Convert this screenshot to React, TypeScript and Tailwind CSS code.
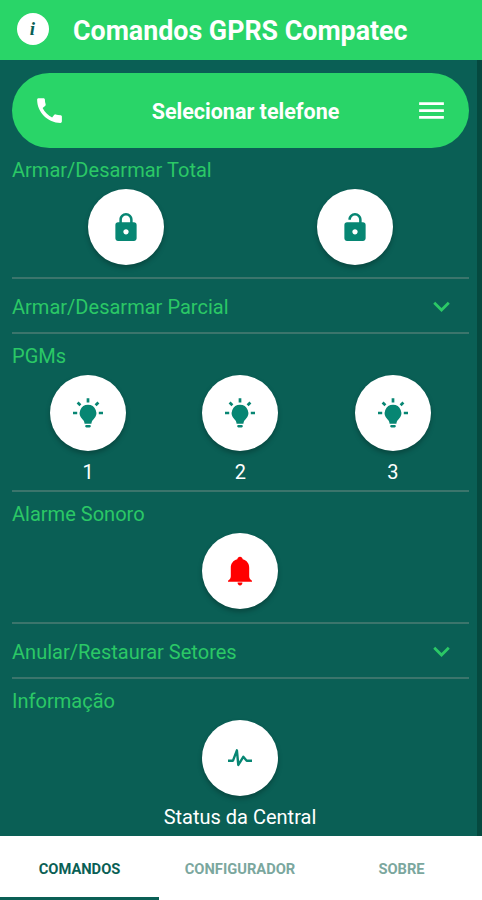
import type { ReactNode } from 'react'
import { MdCall, MdExpandMore, MdMenu } from 'react-icons/md'
import { IoMdLock, IoMdUnlock } from 'react-icons/io'

interface RoundButtonProps {
  children: ReactNode
  label?: string
}

function RoundButton({ children, label }: RoundButtonProps) {
  return (
    <div className="flex flex-1 flex-col items-center">
      <button className="flex size-[76px] items-center justify-center rounded-full bg-white text-[#078673] shadow-[0_3px_5px_rgba(0,0,0,0.25)]">
        {children}
      </button>
      {label && <span className="mt-2 h-6 text-[20px] leading-[26px] whitespace-nowrap text-white">{label}</span>}
    </div>
  )
}

interface SectionProps {
  title: string
  className?: string
  children: ReactNode
}

function Section({ title, className = '', children }: SectionProps) {
  return (
    <section className={className}>
      <h2 className="h-[34px] pt-2 text-[20.05px] leading-7 text-[#2bc866]">{title}</h2>
      <div className="mt-[7px] flex">{children}</div>
    </section>
  )
}

function CollapsedSection({ title }: { title: string }) {
  return (
    <button className="flex h-[55px] w-full items-center justify-between border-b-2 border-[#3b756c] pt-0.5 pr-[11px] text-[#2bc866]">
      <span className="text-[20.05px] leading-7">{title}</span>
      <MdExpandMore size={33} />
    </button>
  )
}

function BulbIcon() {
  return (
    <svg width="32" height="32" viewBox="0 0 32 32" fill="currentColor">
      <path d="M16 7.800a8.300 8.300 0 0 0-5.600 14.400c1.500 1.300 2 2.600 2.200 4.600h6.800c.2-2 .7-3.300 2.200-4.600A8.300 8.300 0 0 0 16 7.800z" />
      <rect x="13.2" y="28" width="5.6" height="2.4" rx="1.100" />
      <path
        d="M16 1.200v4.400M5.600 5.500l2.800 2.800M26.400 5.500l-2.800 2.800M1 16h4.200M26.800 16H31"
        fill="none"
        stroke="currentColor"
        strokeWidth="2.7"
      />
    </svg>
  )
}

function BellIcon() {
  return (
    <svg width="26" height="30" viewBox="0 0 26 30" fill="#ff0000">
      <path d="M13 .8c1.500 0 2.500.9 2.700 2.400 4.200 1.200 6.500 4.300 6.500 8.600v8.500c0 1.800.9 3.200 2.800 4.500v.9H1v-.9c1.900-1.300 2.800-2.700 2.800-4.500v-8.500c0-4.300 2.300-7.400 6.500-8.600C10.500 1.700 11.500.8 13 .8z" />
      <path d="M10.600 26.500h4.800c0 1.800-.8 2.900-2.400 2.900s-2.400-1.100-2.400-2.900z" />
    </svg>
  )
}

function PulseIcon() {
  return (
    <svg width="26" height="20" viewBox="0 0 26 20" fill="none" stroke="currentColor" strokeWidth="2.400" strokeLinejoin="round">
      <path d="M1 12.700h5L9.900 2.300l1.400 14.700 5-8.200 3.400 3.900H25" />
    </svg>
  )
}

export default function App() {
  return (
    <div className="flex h-[900px] w-[482px] flex-col overflow-hidden bg-[#0a5f55] font-[Roboto,sans-serif]">
      <header className="flex h-[60px] shrink-0 items-center bg-[#29d568] pl-[17px]">
        <span className="mb-0.5 flex size-8 items-center justify-center rounded-full bg-white pr-px font-['Liberation_Serif',serif] text-[19px] font-bold text-[#086056] italic">
          i
        </span>
        <h1 className="ml-6 pt-0.5 text-[26.8px] font-bold whitespace-nowrap text-white">Comandos GPRS Compatec</h1>
      </header>

      <main className="flex-1 border-r-[5px] border-[#05493f] pt-[13px] pr-2 pl-3">
        <button className="flex h-[75px] w-full items-center justify-between rounded-full bg-[#29d568] px-[21px] text-white">
          <MdCall size={33} />
          <span className="pt-1 pl-2.5 text-[21.5px] font-bold">Selecionar telefone</span>
          <MdMenu size={33} />
        </button>

        <Section title="Armar/Desarmar Total" className="h-[131px] border-b-2 border-[#3b756c]">
          <RoundButton>
            <IoMdLock size={34} />
          </RoundButton>
          <RoundButton>
            <IoMdUnlock size={34} />
          </RoundButton>
        </Section>

        <CollapsedSection title="Armar/Desarmar Parcial" />

        <Section title="PGMs" className="h-[158px] border-b-2 border-[#3b756c]">
          {['1', '2', '3'].map((pgm) => (
            <RoundButton key={pgm} label={pgm}>
              <BulbIcon />
            </RoundButton>
          ))}
        </Section>

        <Section title="Alarme Sonoro" className="h-[132px] border-b-2 border-[#3b756c] pr-px">
          <RoundButton>
            <BellIcon />
          </RoundButton>
        </Section>

        <CollapsedSection title="Anular/Restaurar Setores" />

        <Section title="Informação" className="pr-px">
          <RoundButton label="Status da Central">
            <PulseIcon />
          </RoundButton>
        </Section>
      </main>

      <nav className="grid h-16 shrink-0 grid-cols-[159px_162px_161px] bg-white text-[14.7px] font-bold">
        <button className="border-b-[3px] border-[#0a5f55] pt-[5px] text-[#0a5f55]">COMANDOS</button>
        <button className="pt-0.5 text-[#7ba79e]">CONFIGURADOR</button>
        <button className="pt-0.5 text-[#7ba79e]">SOBRE</button>
      </nav>
    </div>
  )
}
